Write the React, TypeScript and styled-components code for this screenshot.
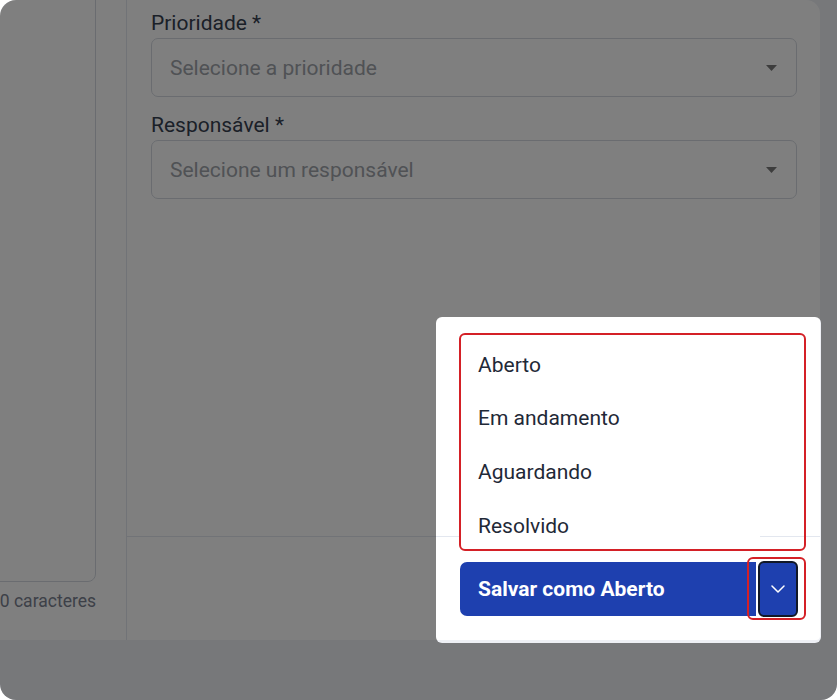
import React from 'react';
import styled, { createGlobalStyle } from 'styled-components';

const Global = createGlobalStyle`
  html, body { margin: 0; padding: 0; background: #ffffff; }
  body { font-family: Roboto, "Noto Sans", Arial, sans-serif; }
  * { box-sizing: border-box; }
`;

const Frame = styled.div`
  width: 837px;
  height: 700px;
  border-radius: 16px 0 16px 16px;
  overflow: hidden;
  background: #eef0f5;
  position: relative;
`;

const Modal = styled.div`
  width: 820px;
  height: 640px;
  background: #ffffff;
  border-radius: 0 14px 4px 0;
  display: flex;
`;

const LeftCol = styled.div`
  width: 127px;
  flex: none;
  border-right: 1px solid #e3e7ef;
  padding: 0 30px 27px 0;
  display: flex;
  flex-direction: column;
  align-items: flex-end;
`;

const TextBox = styled.div`
  width: 320px;
  flex: 1;
  margin-top: -20px;
  border: 1px solid #d5d9e0;
  border-radius: 8px;
  background: #ffffff;
`;

const Caption = styled.div`
  margin-top: 7px;
  font-size: 17.5px;
  line-height: 24px;
  color: #7b8190;
  white-space: nowrap;
`;

const RightCol = styled.div`
  flex: 1;
  display: flex;
  flex-direction: column;
`;

const Body = styled.div`
  flex: 1;
  padding: 8px 23px 0 24px;
  display: flex;
  flex-direction: column;
  gap: 13px;
`;

const Field = styled.div`
  display: flex;
  flex-direction: column;
`;

const Label = styled.label`
  font-size: 21px;
  line-height: 30px;
  color: #374151;
`;

const SelectBox = styled.div`
  height: 59px;
  border: 1px solid #d5d9e0;
  border-radius: 7px;
  padding: 0 19px 0 18px;
  display: flex;
  align-items: center;
  justify-content: space-between;
  font-size: 21px;
  color: #a0a4ab;
  background: #ffffff;
`;

const Footer = styled.div`
  height: 104px;
  border-top: 1px solid #e3e7ef;
  display: flex;
  justify-content: flex-end;
  align-items: center;
  padding-right: 22px;
`;

const SplitGroup = styled.div`
  position: relative;
  display: flex;
  align-items: center;
  gap: 2px;
`;

const MainButton = styled.button`
  width: 296px;
  height: 54px;
  background: #1e40af;
  color: #ffffff;
  font-family: inherit;
  font-size: 21px;
  font-weight: 700;
  border: none;
  border-radius: 7px 0 0 7px;
  padding: 0 18px;
  text-align: left;
  position: relative;
  z-index: 2;
`;

const ChevronButton = styled.button`
  width: 40px;
  height: 56px;
  background: #1e40af;
  border: 2px solid #111827;
  border-radius: 6px;
  display: flex;
  align-items: center;
  justify-content: center;
  padding: 0;
  position: relative;
  z-index: 2;
`;

const Spotlight = styled.div`
  position: absolute;
  left: -24px;
  top: -244px;
  width: 385px;
  height: 326px;
  border-radius: 6px;
  box-shadow: 0 0 0 3000px rgba(0, 0, 0, 0.5);
  pointer-events: none;
  z-index: 1;
`;

const Menu = styled.div`
  position: absolute;
  left: 0;
  bottom: calc(100% + 8px);
  width: 300px;
  padding-top: 4px;
  background: #ffffff;
  z-index: 2;
`;

const MenuItem = styled.div`
  height: 53.67px;
  display: flex;
  align-items: center;
  padding: 0 18px;
  font-size: 21px;
  color: #1f2937;
`;

const Highlight = styled.div<{ $l: number; $t: number; $w: number; $h: number }>`
  position: absolute;
  left: ${(p) => p.$l}px;
  top: ${(p) => p.$t}px;
  width: ${(p) => p.$w}px;
  height: ${(p) => p.$h}px;
  border: 2px solid #d42026;
  border-radius: 6px;
  pointer-events: none;
  z-index: 3;
`;

const Caret = () => (
  <svg width="11" height="6" viewBox="0 0 11 6">
    <path d="M0 0 H11 L5.5 6 Z" fill="#7a7a7a" />
  </svg>
);

const Chevron = () => (
  <svg width="14" height="8" viewBox="0 0 14 8">
    <path d="M1 1 L7 7 L13 1" fill="none" stroke="#ffffff" strokeWidth="1.5" strokeLinecap="round" strokeLinejoin="round" />
  </svg>
);

const statuses = ['Aberto', 'Em andamento', 'Aguardando', 'Resolvido'];

export default function App() {
  return (
    <>
      <Global />
      <Frame>
        <Modal>
          <LeftCol>
            <TextBox />
            <Caption>Máximo de 2000 caracteres</Caption>
          </LeftCol>
          <RightCol>
            <Body>
              <Field>
                <Label>Prioridade *</Label>
                <SelectBox>
                  <span>Selecione a prioridade</span>
                  <Caret />
                </SelectBox>
              </Field>
              <Field>
                <Label>Responsável *</Label>
                <SelectBox>
                  <span>Selecione um responsável</span>
                  <Caret />
                </SelectBox>
              </Field>
            </Body>
            <Footer>
              <SplitGroup>
                <Spotlight />
                <Menu>
                  {statuses.map((s) => (
                    <MenuItem key={s}>{s}</MenuItem>
                  ))}
                </Menu>
                <MainButton>Salvar como Aberto</MainButton>
                <ChevronButton aria-label="Mais opções">
                  <Chevron />
                </ChevronButton>
                <Highlight $l={-1} $t={-228} $w={347} $h={218} />
                <Highlight $l={287} $t={-4} $w={59} $h={63} />
              </SplitGroup>
            </Footer>
          </RightCol>
        </Modal>
      </Frame>
    </>
  );
}
